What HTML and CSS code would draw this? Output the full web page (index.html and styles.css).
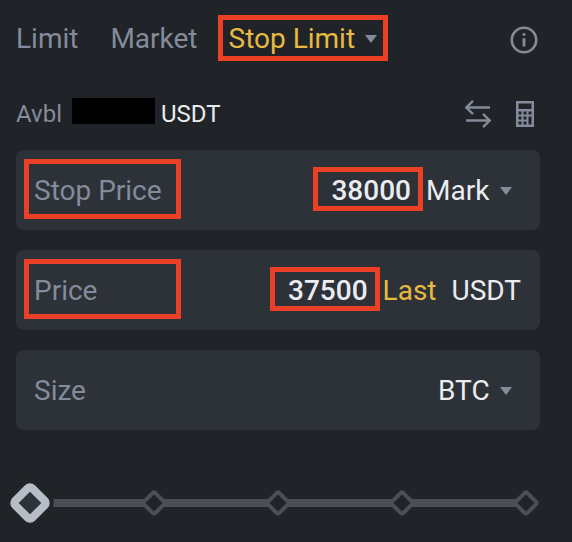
FILE: index.html
```html
<!DOCTYPE html>
<html lang="en">
<head>
  <meta charset="utf-8">
  <meta name="viewport" content="width=device-width, initial-scale=1">
  <title>Stop Limit order</title>
  <link rel="stylesheet" href="styles.css">
</head>
<body>
  <form class="order">
    <nav class="tabs">
      <button class="tab" type="button">Limit</button>
      <button class="tab" type="button">Market</button>
      <button class="tab tab-active highlight" type="button">Stop Limit
        <svg class="caret" viewBox="0 0 12 8" aria-hidden="true"><path d="M0 0h12L6 8z"/></svg>
      </button>
      <button class="icon-button info" type="button" aria-label="Order type information">
        <svg width="28" height="28" viewBox="0 0 28 28" fill="none" stroke="currentColor" aria-hidden="true">
          <circle cx="14" cy="14" r="12.2" stroke-width="2.6"/>
          <path d="M14 7.2v2.6M14 12.2v8.4" stroke-width="2.8"/>
        </svg>
      </button>
    </nav>

    <div class="balance">
      <span class="muted">Avbl</span>
      <span class="redacted"></span>
      <span>USDT</span>
      <div class="tools">
        <button class="icon-button" type="button" aria-label="Transfer">
          <svg width="28" height="28" viewBox="0 0 28 28" fill="none" stroke="currentColor" stroke-width="2.4" aria-hidden="true">
            <path d="M26 7.5H3M9 .8 2.3 7.5 9 14.2M2 20.5h23M19 13.8l6.7 6.7-6.7 6.7"/>
          </svg>
        </button>
        <button class="icon-button" type="button" aria-label="Calculator">
          <svg width="18" height="26" viewBox="0 0 18 26" fill="currentColor" aria-hidden="true">
            <path fill-rule="evenodd" d="M0 0h18v26H0zM2.500 2.500v5.500h13v-5.500zM2.500 10.500v3h3v-3zM7.500 10.500v3h3v-3zM12.500 10.500v3h3v-3zM2.500 15.500v3h3v-3zM7.500 15.500v3h3v-3zM12.500 15.500v8h3v-8zM2.500 20.500v3h3v-3zM7.500 20.500v3h3v-3z"/>
          </svg>
        </button>
      </div>
    </div>

    <div class="field">
      <label class="label highlight" for="stop-price">Stop Price</label>
      <input class="value highlight" id="stop-price" type="text" inputmode="decimal" value="38000">
      <span class="picker">
        <select class="select" aria-label="Trigger price"><option>Mark</option></select>
        <svg class="caret" viewBox="0 0 12 8" aria-hidden="true"><path d="M0 0h12L6 8z"/></svg>
      </span>
    </div>

    <div class="field">
      <label class="label highlight" for="price">Price</label>
      <input class="value highlight" id="price" type="text" inputmode="decimal" value="37500">
      <span class="unit">
        <button class="last" type="button">Last</button>
        <span>USDT</span>
      </span>
    </div>

    <div class="field">
      <label class="label" for="size">Size</label>
      <input class="value" id="size" type="text" inputmode="decimal">
      <span class="picker">
        <select class="select" aria-label="Size unit"><option>BTC</option></select>
        <svg class="caret" viewBox="0 0 12 8" aria-hidden="true"><path d="M0 0h12L6 8z"/></svg>
      </span>
    </div>

    <div class="slider">
      <div class="ticks" aria-hidden="true">
        <span class="tick"></span><span class="tick"></span><span class="tick"></span><span class="tick"></span><span class="tick"></span>
      </div>
      <input class="range" type="range" min="0" max="100" value="0" aria-label="Size percentage">
    </div>
  </form>
</body>
</html>
```
FILE: styles.css
```css
:root {
  --bg: #202327;
  --panel: #2d3138;
  --muted: #848b9b;
  --text: #eaecef;
  --gold: #e8ba42;
  --line: #4a4e57;
  --mark: #eb4025;
}

* {
  box-sizing: border-box;
}

body {
  margin: 0;
  background: var(--bg);
  color: var(--text);
  font: 28px/36px Roboto, "Liberation Sans", sans-serif;
}

button,
input,
select {
  margin: 0;
  padding: 0;
  border: 0;
  background: none;
  color: inherit;
  font: inherit;
}

.order {
  padding: 15px 32px 16px 16px;
}

.highlight {
  border: 5px solid var(--mark);
}

.muted {
  color: var(--muted);
}

.caret {
  flex: none;
  width: 12px;
  height: 8px;
  fill: var(--muted);
}

.icon-button {
  display: flex;
  color: var(--muted);
}

.tabs {
  display: flex;
  align-items: center;
  height: 46px;
}

.tab {
  margin-right: 32px;
  padding-top: 2px;
  color: var(--muted);
}

.tab-active {
  display: flex;
  align-items: center;
  gap: 10px;
  height: 46px;
  margin: 0 0 0 -12px;
  padding: 2px 6px 0;
  color: var(--gold);
}

.info {
  margin: 4px 2px 0 auto;
}

.balance {
  display: flex;
  align-items: center;
  height: 36px;
  margin: 35px 0 18px;
  font-size: 24px;
}

.redacted {
  width: 83px;
  height: 26px;
  margin: 0 6px 6px 10px;
  background: #000;
}

.tools {
  display: flex;
  align-items: center;
  gap: 24px;
  margin: 0 6px 0 auto;
}

.field {
  display: flex;
  align-items: center;
  height: 80px;
  margin-bottom: 20px;
  padding: 0 0 3px 8px;
  border-radius: 8px;
  background: var(--panel);
}

.label {
  display: flex;
  align-items: center;
  width: 157px;
  height: 60px;
  padding: 4px 0 0 5px;
  color: var(--muted);
}

.label:not(.highlight) {
  padding-left: 10px;
}

.value {
  width: 110px;
  height: 44px;
  margin-left: auto;
  padding: 4px 7px 0 0;
  font-weight: 500;
  text-align: right;
  outline: 0;
}

.picker,
.unit {
  display: flex;
  align-items: center;
  padding-top: 4px;
}

.picker {
  gap: 10px;
  margin-left: 3px;
  padding-right: 28px;
}

.select {
  appearance: none;
  outline: 0;
}

.unit {
  gap: 15px;
  margin-left: 3px;
  padding-right: 19px;
}

.last {
  color: var(--gold);
}

.slider {
  display: grid;
  align-items: center;
  margin: 53px -2px 0;
}

.slider > * {
  grid-area: 1 / 1;
}

.ticks {
  display: flex;
  justify-content: space-between;
  align-items: center;
  height: 8px;
  margin: 0 16px;
  background: var(--line);
}

.tick {
  width: 20px;
  height: 20px;
  margin: 0 -10px;
  border: 4px solid var(--line);
  border-radius: 4px;
  background: var(--bg);
  transform: rotate(45deg);
}

.range {
  z-index: 1;
  appearance: none;
  width: 100%;
  height: 40px;
  outline: 0;
}

.range::-webkit-slider-thumb {
  appearance: none;
  width: 32px;
  height: 32px;
  border: 8px solid #b7bdc6;
  border-radius: 7px;
  background: var(--panel);
  box-shadow: 0 0 0 4px var(--bg);
  transform: rotate(45deg);
}
```
